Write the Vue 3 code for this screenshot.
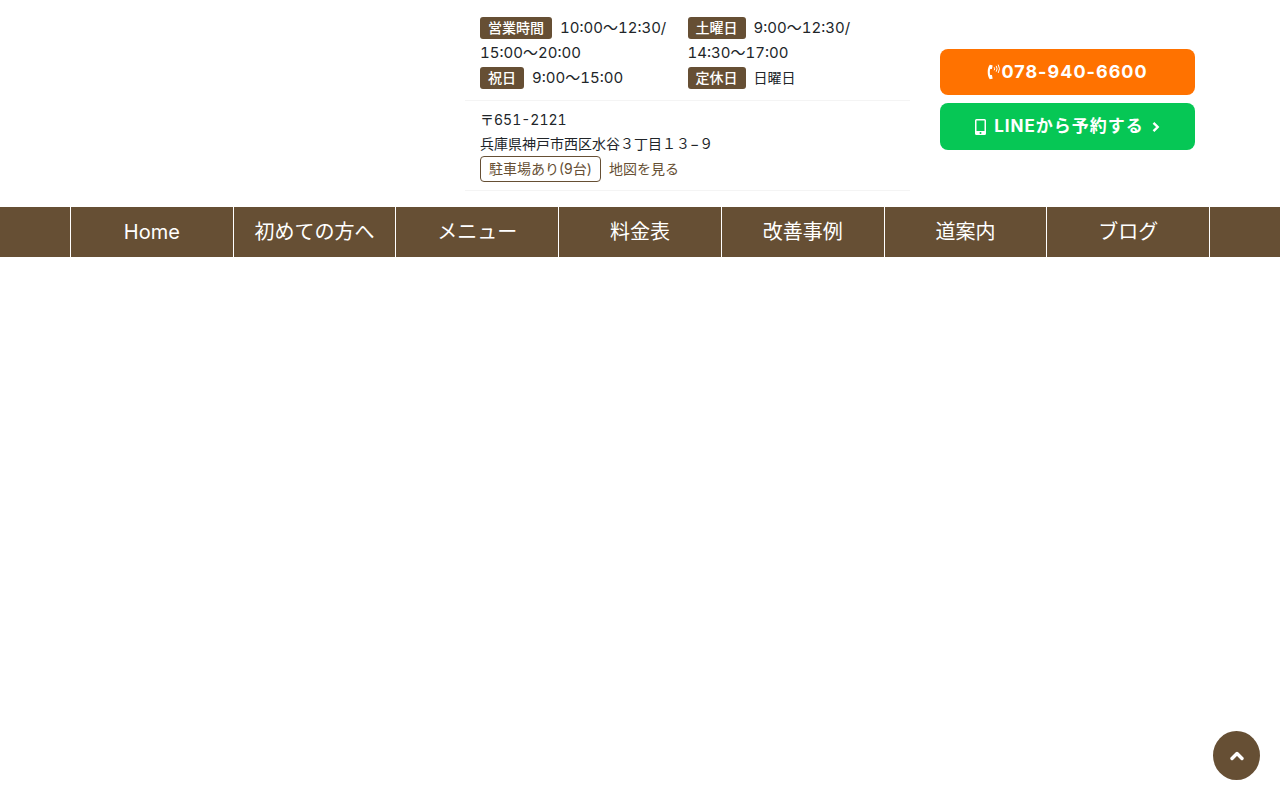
<template>
  <div class="page">
    <header class="header">
      <div class="container header-inner">
        <div class="header-info">
          <div class="hours">
            <div v-for="(column, i) in hours" :key="i" class="hours-col">
              <p v-for="item in column" :key="item.label" class="hours-row">
                <span class="badge">{{ item.label }}</span>
                <template v-for="(line, n) in item.lines" :key="line"><br v-if="n > 0"><span :class="{ time: !item.closed }">{{ line }}</span></template>
              </p>
            </div>
          </div>
          <address class="address">
            <span class="postal">〒651-2121</span><br>
            兵庫県神戸市西区水谷３丁目１３−９
            <div class="access">
              <span class="parking">駐車場あり(9台)</span>
              <a href="#access">地図を見る</a>
            </div>
          </address>
        </div>
        <div class="header-cta">
          <a class="cta cta-tel" href="tel:078-940-6600">
            <svg class="icon-tel" viewBox="0 0 14 16" aria-hidden="true">
              <path d="M5.2 1.2 2.8.8C1.400 2.600.7 5 .7 8s.7 5.400 2.100 7.200l2.400-.4c.3 0 .5-.3.400-.6l-.6-2.900c-.1-.3-.3-.4-.6-.4l-1.200.1c-.5-1.900-.5-4.100 0-6l1.200.1c.3 0 .5-.1.6-.4l.6-2.900c.1-.3-.1-.6-.4-.6z" fill="currentColor" />
              <path d="M7.400 3.600q.8 1.200 0 2.400M9.400 2.200q1.600 2.600 0 5.200M11.400 1q2.400 3.800 0 7.600" fill="none" stroke="currentColor" stroke-width="1" stroke-linecap="round" />
            </svg>
            <span>078-940-6600</span>
          </a>
          <a class="cta cta-line" href="#line">
            <svg class="icon-mobile" viewBox="0 0 11 16" aria-hidden="true">
              <path fill="currentColor" fill-rule="evenodd" d="M1.500 0h8A1.500 1.500 0 0 1 11 1.500v13A1.500 1.500 0 0 1 9.500 16h-8A1.500 1.500 0 0 1 0 14.500v-13A1.500 1.500 0 0 1 1.500 0zM1.500 1.500v10.500h8V1.500zM5.500 13a1 1 0 1 0 0 2 1 1 0 0 0 0-2z" />
            </svg>
            <span>LINEから予約する</span>
            <svg class="icon-right" viewBox="0 0 8 12" aria-hidden="true">
              <path d="M1.500 1.800l4.200 4.200-4.200 4.200" fill="none" stroke="currentColor" stroke-width="2.400" />
            </svg>
          </a>
        </div>
      </div>
    </header>

    <nav class="global-nav">
      <ul class="container nav-list">
        <li v-for="item in menu" :key="item.label">
          <a :href="item.href">{{ item.label }}</a>
        </li>
      </ul>
    </nav>

    <button class="page-top" type="button" aria-label="ページの先頭へ" @click="scrollTop">
      <svg viewBox="0 0 14 10" aria-hidden="true">
        <path d="M2 7.500l5-5 5 5" fill="none" stroke="currentColor" stroke-width="3.400" stroke-linecap="round" stroke-linejoin="round" />
      </svg>
    </button>
  </div>
</template>

<script setup>
const hours = [
  [
    { label: '営業時間', lines: ['10:00～12:30/', '15:00～20:00'] },
    { label: '祝日', lines: ['9:00～15:00'] },
  ],
  [
    { label: '土曜日', lines: ['9:00～12:30/', '14:30～17:00'] },
    { label: '定休日', lines: ['日曜日'], closed: true },
  ],
];

const menu = [
  { label: 'Home', href: '#home' },
  { label: '初めての方へ', href: '#first' },
  { label: 'メニュー', href: '#menu' },
  { label: '料金表', href: '#price' },
  { label: '改善事例', href: '#case' },
  { label: '道案内', href: '#access' },
  { label: 'ブログ', href: '#blog' },
];

const scrollTop = () => {
  window.scrollTo({ top: 0, behavior: 'smooth' });
};
</script>

<style>
body {
  margin: 0;
  background: #fff;
}
</style>

<style scoped>
.page {
  color: #212529;
  font-family: Inter, "Noto Sans CJK JP", sans-serif;
  font-size: 14px;
  line-height: 25px;
}

.container {
  box-sizing: border-box;
  max-width: 1140px;
  margin: 0 auto;
}

.header {
  padding: 15px 0 16px;
}

.header-inner {
  display: grid;
  grid-template-columns: 445px 285px;
  justify-content: end;
  column-gap: 15px;
}

.hours {
  display: grid;
  grid-template-columns: 1fr 1fr;
  padding: 0 15px 10px;
  border-bottom: 1px solid #f4f4f4;
}

.hours-row {
  margin: 0;
}

.time {
  font-size: 15px;
  font-variant-numeric: tabular-nums;
}

.badge {
  display: inline-block;
  margin-right: 8px;
  padding: 0 8px;
  border-radius: 3px;
  background: #664f34;
  color: #fff;
  font-weight: 500;
  line-height: 22px;
}

.address {
  padding: 7px 15px 8px;
  border-bottom: 1px solid #f4f4f4;
  font-style: normal;
  line-height: 24px;
}

.postal {
  font-variant-numeric: tabular-nums;
}

.access {
  display: flex;
  align-items: center;
  gap: 8px;
  color: #664f34;
}

.access a {
  color: inherit;
  text-decoration: none;
}

.parking {
  padding: 0 8px;
  border: 1px solid #664f34;
  border-radius: 4px;
}

.header-cta {
  display: flex;
  flex-direction: column;
  gap: 8px;
  padding: 34px 15px 0;
}

.cta {
  display: flex;
  align-items: center;
  justify-content: center;
  border-radius: 8px;
  color: #fff;
  font-weight: 700;
  letter-spacing: 1px;
  line-height: 46px;
  text-decoration: none;
}

.cta-tel {
  background: #ff7200;
  font-size: 18px;
}

.cta-line {
  gap: 8px;
  background: #06c755;
  font-size: 17px;
  line-height: 47px;
}

.icon-tel {
  width: 14px;
  height: 16px;
}

.icon-mobile {
  width: 11px;
  height: 16px;
}

.icon-right {
  width: 8px;
  height: 12px;
}

.global-nav {
  background: #664f34;
}

.nav-list {
  display: flex;
  padding: 0;
  list-style: none;
}

.nav-list li {
  flex: 1;
  border-left: 1px solid #fff;
}

.nav-list li:last-child {
  border-right: 1px solid #fff;
}

.nav-list a {
  display: block;
  color: #fff;
  font-size: 20px;
  line-height: 50px;
  text-align: center;
  text-decoration: none;
}

.page-top {
  position: fixed;
  right: 20px;
  bottom: 20px;
  display: flex;
  align-items: center;
  justify-content: center;
  width: 47px;
  height: 49px;
  padding: 0;
  border: 0;
  border-radius: 50%;
  background: #664f34;
  color: #fff;
  cursor: pointer;
}

.page-top svg {
  width: 14px;
  height: 10px;
}
</style>
